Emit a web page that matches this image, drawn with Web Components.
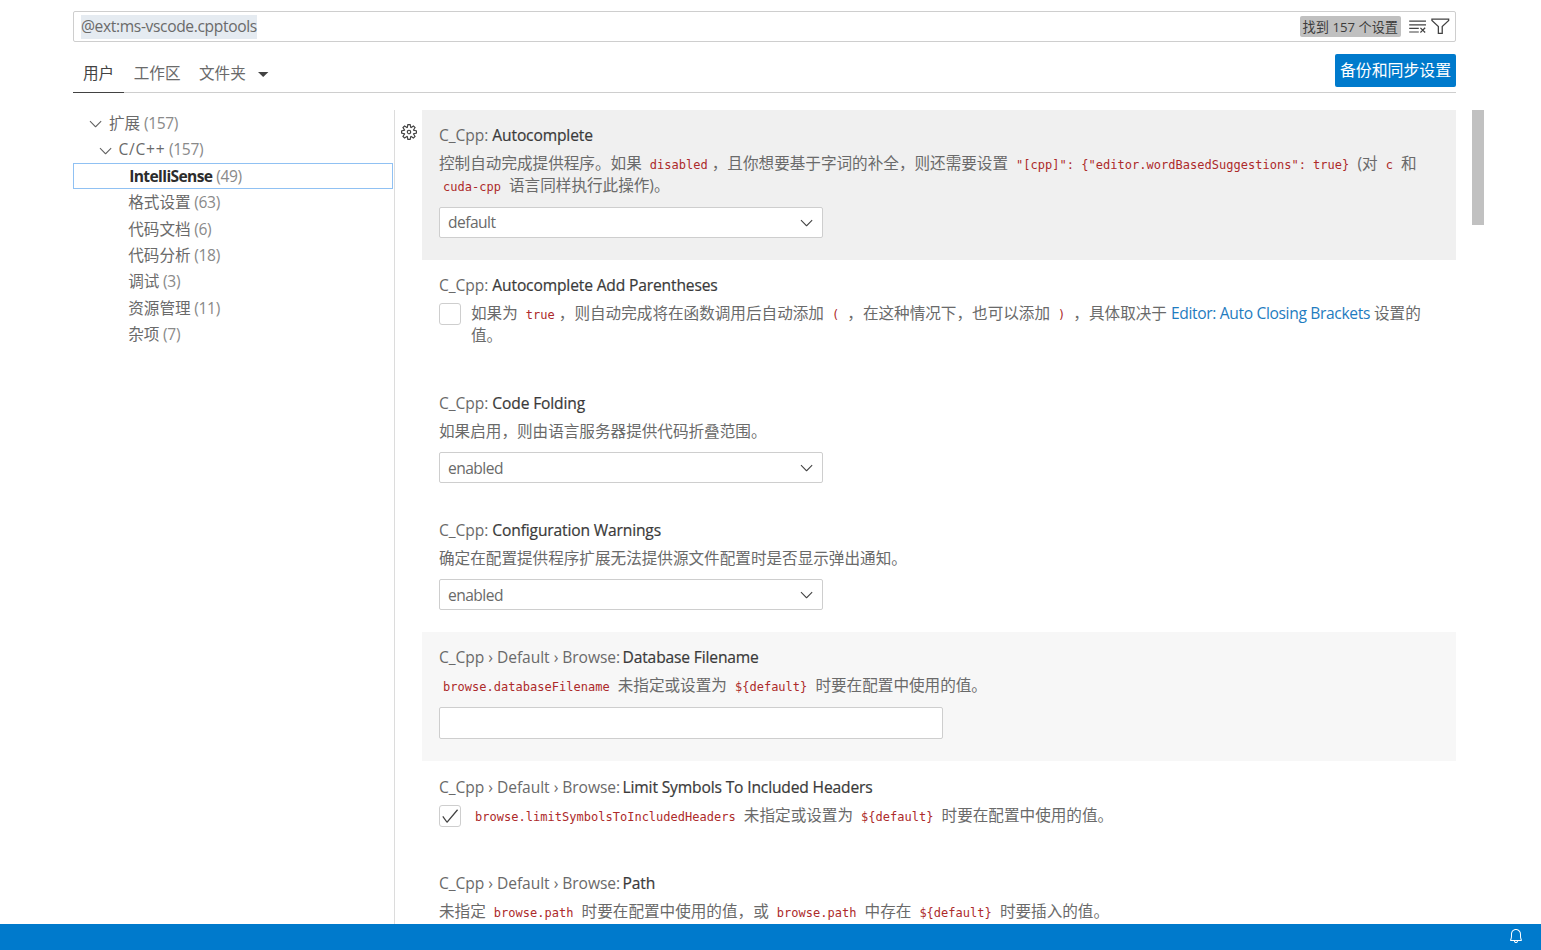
<!DOCTYPE html>
<html lang="zh">
<head>
<meta charset="utf-8">
<title>Settings</title>
<style>
  html, body { margin: 0; height: 100%; overflow: hidden; background: #fff; }
  body { font: 15.6px/21.6px "Open Sans", "Noto Sans CJK SC", sans-serif; color: #6a6a6a; }
</style>
</head>
<body>
<settings-editor>
  <search-bar slot="search" value="@ext:ms-vscode.cpptools" count="找到 157 个设置"></search-bar>
  <settings-tabs slot="tabs"></settings-tabs>

  <toc-item slot="toc" depth="0" open label="扩展" count="(157)"></toc-item>
  <toc-item slot="toc" depth="1" open label="C/C++" count="(157)"></toc-item>
  <toc-item slot="toc" depth="2" focused label="IntelliSense" count="(49)"></toc-item>
  <toc-item slot="toc" depth="2" label="格式设置" count="(63)"></toc-item>
  <toc-item slot="toc" depth="2" label="代码文档" count="(6)"></toc-item>
  <toc-item slot="toc" depth="2" label="代码分析" count="(18)"></toc-item>
  <toc-item slot="toc" depth="2" label="调试" count="(3)"></toc-item>
  <toc-item slot="toc" depth="2" label="资源管理" count="(11)"></toc-item>
  <toc-item slot="toc" depth="2" label="杂项" count="(7)"></toc-item>

  <setting-row state="focus" gear height="150" dgap="6.8" gap="10.4" prefix="C_Cpp:" name="Autocomplete">
    控制自动完成提供程序。如果 <s-code>disabled</s-code>，且你想要基于字词的补全，则还需要设置 <s-code>"[cpp]": {"editor.wordBasedSuggestions": true}</s-code> (对 <s-code>c</s-code> 和 <s-code>cuda-cpp</s-code> 语言同样执行此操作)。
    <select-box slot="control" value="default"></select-box>
  </setting-row>

  <setting-row height="117.6" dgap="6.8" prefix="C_Cpp:" name="Autocomplete Add Parentheses" check="off">
    如果为 <s-code>true</s-code>，则自动完成将在函数调用后自动添加 <s-code>(</s-code> ，在这种情况下，也可以添加 <s-code>)</s-code> ，具体取决于 <s-link>Editor: Auto Closing Brackets</s-link> 设置的值。
  </setting-row>

  <setting-row height="127.2" prefix="C_Cpp:" name="Code Folding">
    如果启用，则由语言服务器提供代码折叠范围。
    <select-box slot="control" value="enabled"></select-box>
  </setting-row>

  <setting-row height="127" prefix="C_Cpp:" name="Configuration Warnings">
    确定在配置提供程序扩展无法提供源文件配置时是否显示弹出通知。
    <select-box slot="control" value="enabled"></select-box>
  </setting-row>

  <setting-row state="hover" height="129.7" gap="10.6" prefix="C_Cpp › Default › Browse:" name="Database Filename">
    <s-code>browse.databaseFilename</s-code> 未指定或设置为 <s-code>${default}</s-code> 时要在配置中使用的值。
    <text-box slot="control"></text-box>
  </setting-row>

  <setting-row height="96" pad="15.6" prefix="C_Cpp › Default › Browse:" name="Limit Symbols To Included Headers" check="on">
    <s-code>browse.limitSymbolsToIncludedHeaders</s-code> 未指定或设置为 <s-code>${default}</s-code> 时要在配置中使用的值。
  </setting-row>

  <setting-row height="96" pad="15.6" prefix="C_Cpp › Default › Browse:" name="Path">
    未指定 <s-code>browse.path</s-code> 时要在配置中使用的值，或 <s-code>browse.path</s-code> 中存在 <s-code>${default}</s-code> 时要插入的值。
  </setting-row>

  <status-bar slot="status"></status-bar>
</settings-editor>

<script>
const CHEVRON = "M7.976 10.072l4.357-4.357.62.618L8.284 11h-.618L3 6.333l.618-.618 4.358 4.357z";

class SCode extends HTMLElement {
  constructor() {
    super();
    this.attachShadow({ mode: "open" }).innerHTML = `
      <style>
        :host {
          display: inline;
          font: 12px "DejaVu Sans Mono", monospace;
          letter-spacing: 0.02px;
          color: #ad2a2a;
          padding: 0 4px;
        }
      </style>
      <slot></slot>`;
  }
}
customElements.define("s-code", SCode);

class SLink extends HTMLElement {
  constructor() {
    super();
    this.attachShadow({ mode: "open" }).innerHTML = `
      <style>:host { display: inline; color: #1f7cc0; letter-spacing: -0.35px; }</style>
      <slot></slot>`;
  }
}
customElements.define("s-link", SLink);

class SearchBar extends HTMLElement {
  connectedCallback() {
    const root = this.shadowRoot || this.attachShadow({ mode: "open" });
    root.innerHTML = `
      <style>
        :host {
          display: flex;
          align-items: center;
          height: 31px;
          box-sizing: border-box;
          border: 1px solid #cecece;
          border-radius: 2px;
          padding: 0 4.3px 0 7px;
          background: #fff;
        }
        .value { flex: 1; }
        .value span {
          display: inline-block;
          height: 24px;
          line-height: 23px;
          background: #e5ebf1;
          color: #6a6a6a;
          letter-spacing: -0.36px;
        }
        .count {
          background: #c0c0c0;
          color: #3c3c3c;
          border-radius: 2px;
          font-size: 13.2px;
          height: 21px;
          line-height: 22px;
          padding: 0 2.5px;
          margin-right: 7.4px;
        }
        svg { display: block; }
        .clear { margin-right: 3px; }
      </style>
      <div class="value"><span>${this.getAttribute("value")}</span></div>
      <div class="count">${this.getAttribute("count")}</div>
      <svg class="clear" width="19.2" height="19.2" viewBox="0 0 16 16" fill="#424242">
        <path d="M10 12.6l.7.7 1.6-1.6 1.6 1.6.8-.7L13 11l1.7-1.6-.8-.8-1.6 1.7-1.6-1.6-.7.7 1.6 1.6-1.6 1.6zM1 4h14V3H1v1zm0 3h14V6H1v1zm8 2.5V9H1v1h8v-.5zM9 13v-1H1v1h8z"/>
      </svg>
      <svg width="20.6" height="20.6" viewBox="0 0 16 16" fill="#424242">
        <path fill-rule="evenodd" d="M15 2v1.67l-5 4.759V14H6V8.429l-5-4.76V2h14zM7 8v5h2V8l5-4.76V3H2v.24L7 8z"/>
      </svg>`;
  }
}
customElements.define("search-bar", SearchBar);

class SettingsTabs extends HTMLElement {
  constructor() {
    super();
    this.attachShadow({ mode: "open" }).innerHTML = `
      <style>
        :host {
          display: flex;
          align-items: flex-start;
          justify-content: space-between;
          height: 39px;
          box-sizing: border-box;
          border-bottom: 1px solid #cecece;
          margin-top: 12px;
        }
        nav { display: flex; height: 38px; }
        .tab { padding: 9px 9.5px 0 10px; color: #6a6a6a; height: 38px; box-sizing: border-box; }
        .tab.on { color: #424242; border-bottom: 1px solid #424242; height: 39px; }
        .tab.folder { display: flex; padding-left: 9px; }
        .tab.folder svg { margin: 5px 0 0 11px; }
        button {
          border: 0;
          border-radius: 2px;
          background: #007acc;
          color: #fff;
          font: inherit;
          font-size: 15.9px;
          height: 33px;
          width: 121px;
          padding: 0;
        }
      </style>
      <nav>
        <div class="tab on">用户</div>
        <div class="tab">工作区</div>
        <div class="tab folder">文件夹
          <svg width="12" height="12" viewBox="0 0 12 12"><path d="M1 4h10.4L6.2 9z" fill="#424242"/></svg>
        </div>
      </nav>
      <button>备份和同步设置</button>`;
  }
}
customElements.define("settings-tabs", SettingsTabs);

class TocItem extends HTMLElement {
  connectedCallback() {
    const root = this.shadowRoot || this.attachShadow({ mode: "open" });
    const depth = Number(this.getAttribute("depth"));
    const focused = this.hasAttribute("focused");
    const twistie = this.hasAttribute("open")
      ? `<svg width="19.2" height="19.2" viewBox="0 0 16 16" fill="#616161"><path d="${CHEVRON}"/></svg>`
      : "";
    const left = 13.4 + depth * 9.6;
    root.innerHTML = `
      <style>
        :host {
          display: flex;
          align-items: center;
          height: 26.4px;
          box-sizing: border-box;
          padding: 1.4px 0 0 ${left}px;
          color: #6a6a6a;
          white-space: pre;
        }
        :host([focused]) { border: 1px solid #90c1f3; padding: 1.6px 0 0 ${left - 1}px; }
        .tw { width: 22.6px; display: flex; flex: none; }
        .label { color: ${focused ? "#2c2c2c" : "inherit"}; font-weight: ${focused ? 700 : 400}; }
        .label.bold { letter-spacing: -0.62px; margin-left: 1px; }
        .label.wide { letter-spacing: 0.7px; }
        .count { color: #8a8a8a; letter-spacing: -0.35px; }
      </style>
      <div class="tw">${twistie}</div>
      <span class="label ${focused ? "bold" : ""} ${this.getAttribute("label") === "C/C++" ? "wide" : ""}">${this.getAttribute("label")}</span>
      <span class="count"> ${this.getAttribute("count")}</span>`;
  }
}
customElements.define("toc-item", TocItem);

class SelectBox extends HTMLElement {
  connectedCallback() {
    const root = this.shadowRoot || this.attachShadow({ mode: "open" });
    root.innerHTML = `
      <style>
        :host {
          display: flex;
          align-items: center;
          justify-content: space-between;
          width: 384px;
          height: 31px;
          box-sizing: border-box;
          border: 1px solid #cecece;
          border-radius: 2px;
          background: #fff;
          padding: 0 6px 0 8px;
          color: #6a6a6a;
        }
        span { letter-spacing: -0.55px; padding-top: 1.6px; }
        svg { display: block; }
      </style>
      <span>${this.getAttribute("value")}</span>
      <svg width="19.2" height="19.2" viewBox="0 0 16 16" fill="#424242"><path d="${CHEVRON}"/></svg>`;
  }
}
customElements.define("select-box", SelectBox);

class TextBox extends HTMLElement {
  constructor() {
    super();
    this.attachShadow({ mode: "open" }).innerHTML = `
      <style>
        :host {
          display: block;
          width: 504px;
          height: 32px;
          box-sizing: border-box;
          border: 1px solid #cecece;
          border-radius: 2px;
          background: #fff;
        }
      </style>`;
  }
}
customElements.define("text-box", TextBox);

class SettingRow extends HTMLElement {
  connectedCallback() {
    const root = this.shadowRoot || this.attachShadow({ mode: "open" });
    const state = this.getAttribute("state");
    const check = this.getAttribute("check");
    const prefix = this.getAttribute("prefix");
    const bg = state === "focus" ? "#f0f0f0" : state === "hover" ? "#f7f7f7" : "transparent";
    const box = check
      ? `<div class="check">${check === "on"
          ? `<svg width="20" height="20" viewBox="0 0 16 16" fill="#424242"><path d="M14.431 3.323l-8.47 10-.79-.036-3.35-4.77.818-.574 2.978 4.24 8.051-9.506.764.646z"/></svg>`
          : ""}</div>`
      : "";
    const gear = this.hasAttribute("gear")
      ? `<svg class="gear" width="16" height="16" viewBox="0 0 24 24" fill="#424242"><path fill-rule="evenodd" clip-rule="evenodd" d="M19.85 8.75l4.15.83v4.84l-4.15.83 2.35 3.52-3.43 3.43-3.52-2.35-.83 4.15H9.58l-.83-4.15-3.52 2.35-3.43-3.43 2.35-3.52L0 14.42V9.58l4.15-.83L1.8 5.23 5.23 1.8l3.52 2.35L9.58 0h4.84l.83 4.15 3.52-2.35 3.43 3.43-2.35 3.52zm-1.57 5.07l4-.81v-2l-4-.81-.54-1.3 2.29-3.43-1.43-1.43-3.43 2.29-1.3-.54-.81-4h-2l-.81 4-1.3.54-3.43-2.29-1.43 1.43L6.38 8.9l-.54 1.3-4 .81v2l4 .81.54 1.3-2.29 3.43 1.43 1.43 3.43-2.29 1.3.54.81 4h2l.81-4 1.3-.54 3.43 2.29 1.43-1.43-2.29-3.43.54-1.3zm-8.186-4.672A3.43 3.43 0 0 1 12 8.57 3.44 3.44 0 0 1 15.43 12a3.43 3.43 0 1 1-5.336-2.852zm.956 4.274c.281.188.612.288.95.288A1.7 1.7 0 0 0 13.71 12a1.71 1.71 0 1 0-2.66 1.422z"/></svg>`
      : "";
    root.innerHTML = `
      <style>
        :host {
          display: block;
          position: relative;
          flex: none;
          box-sizing: border-box;
          height: ${this.getAttribute("height")}px;
          padding: ${this.getAttribute("pad") || 15}px 17px 0;
          background: ${bg};
        }
        .title { color: #6a6a6a; white-space: pre; letter-spacing: -0.05px; }
        .title b {
          color: #3a3a3a;
          font-weight: 500;
          letter-spacing: -0.15px;
          margin-left: ${prefix.includes("›") ? -1.6 : 0}px;
          -webkit-text-stroke: 0.2px #3a3a3a;
        }
        .body { display: flex; gap: 10px; margin-top: ${this.getAttribute("dgap") || 6.4}px; }
        .check {
          flex: none;
          width: 22px;
          height: 22px;
          box-sizing: border-box;
          border: 1px solid #cecece;
          border-radius: 3px;
          background: #fff;
        }
        .check svg { display: block; }
        .desc { min-width: 0; }
        .control { margin-top: ${this.getAttribute("gap") || 10}px; }
        .gear { position: absolute; left: -21px; top: 14px; }
      </style>
      ${gear}
      <div class="title">${prefix} <b>${this.getAttribute("name")}</b></div>
      <div class="body">${box}<div class="desc"><slot></slot></div></div>
      <div class="control"><slot name="control"></slot></div>`;
  }
}
customElements.define("setting-row", SettingRow);

class StatusBar extends HTMLElement {
  constructor() {
    super();
    this.attachShadow({ mode: "open" }).innerHTML = `
      <style>
        :host {
          display: flex;
          flex: none;
          align-items: center;
          justify-content: flex-end;
          height: 26px;
          box-sizing: border-box;
          padding: 0 17px 2px 0;
          background: #007acc;
        }
        svg { display: block; }
      </style>
      <svg width="16" height="16" viewBox="0 0 16 16" fill="#fff">
        <path d="M13.377 10.573a7.63 7.63 0 0 1-.383-2.38V6.195a5.115 5.115 0 0 0-1.268-3.446 5.138 5.138 0 0 0-3.242-1.722c-.694-.072-1.4 0-2.07.227-.67.215-1.28.574-1.794 1.053a4.923 4.923 0 0 0-1.208 1.675 5.067 5.067 0 0 0-.431 2.022v2.2a7.61 7.61 0 0 1-.383 2.37L2 12.343l.479.658h3.505c0 .526.215 1.04.586 1.412.37.37.885.586 1.412.586.526 0 1.04-.215 1.411-.586s.587-.886.587-1.412h3.505l.478-.658-.586-1.77zm-4.69 3.147a.997.997 0 0 1-.705.299.997.997 0 0 1-.706-.3.997.997 0 0 1-.3-.705h1.999a.939.939 0 0 1-.287.706zm-5.515-1.71l.371-1.114a8.633 8.633 0 0 0 .443-2.691V6.004c0-.563.12-1.113.347-1.616.227-.514.55-.969.969-1.34.419-.382.91-.67 1.436-.837.538-.18 1.1-.24 1.65-.18a4.147 4.147 0 0 1 2.597 1.4 4.133 4.133 0 0 1 1.004 2.776v2.01c0 .909.144 1.818.443 2.691l.371 1.113h-9.63v-.012z"/>
      </svg>`;
  }
}
customElements.define("status-bar", StatusBar);

class SettingsEditor extends HTMLElement {
  constructor() {
    super();
    this.attachShadow({ mode: "open" }).innerHTML = `
      <style>
        :host {
          display: flex;
          flex-direction: column;
          height: 950px;
          overflow: hidden;
        }
        .page {
          flex: 1;
          min-height: 0;
          display: flex;
          flex-direction: column;
          padding: 11px 85px 0 73px;
        }
        .split {
          flex: 1;
          min-height: 0;
          display: flex;
          margin-top: 17px;
          position: relative;
        }
        .toc { width: 320px; flex: none; }
        .list {
          flex: 1;
          min-width: 0;
          display: flex;
          flex-direction: column;
          margin-left: 1px;
          padding-left: 27px;
          border-left: 1px solid #dcdcdc;
        }
        .thumb {
          position: absolute;
          top: 0;
          right: -28px;
          width: 12px;
          height: 115px;
          background: #c1c1c1;
        }
      </style>
      <div class="page">
        <slot name="search"></slot>
        <slot name="tabs"></slot>
        <div class="split">
          <div class="toc"><slot name="toc"></slot></div>
          <div class="list"><slot></slot></div>
          <div class="thumb"></div>
        </div>
      </div>
      <slot name="status"></slot>`;
  }
}
customElements.define("settings-editor", SettingsEditor);
</script>
</body>
</html>
